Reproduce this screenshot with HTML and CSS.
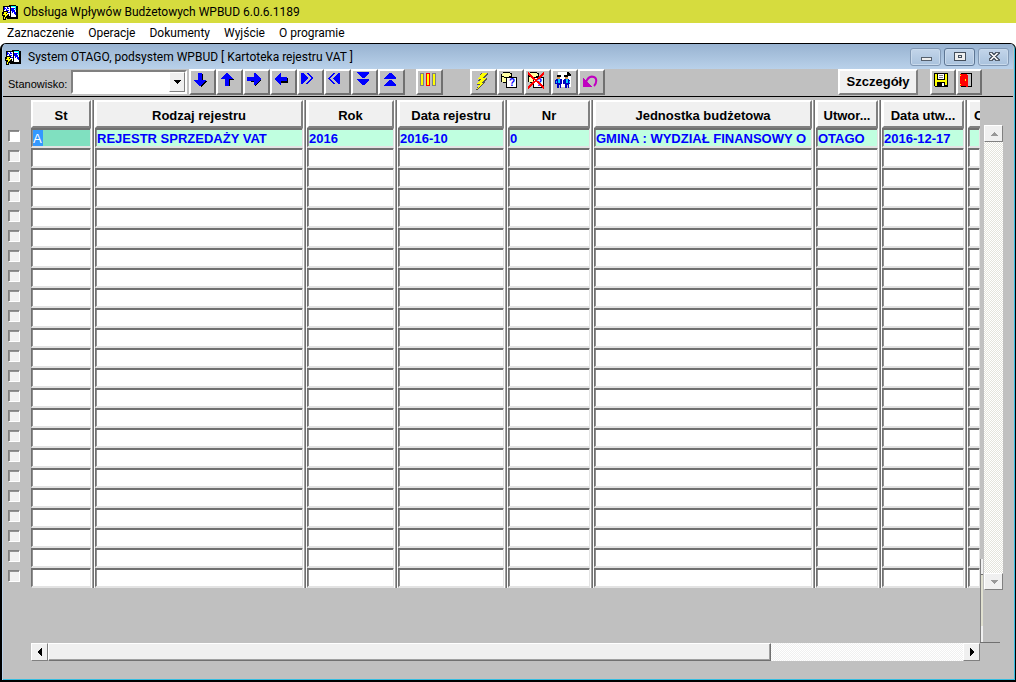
FILE: index.html
```html
<!DOCTYPE html>
<html lang="pl">
<head>
<meta charset="utf-8">
<title>Obsługa Wpływów Budżetowych WPBUD 6.0.6.1189</title>
<link rel="stylesheet" href="styles.css">
<script src="app.js" defer></script>
</head>
<body>
<svg class="defs" aria-hidden="true">
  <symbol id="app" viewBox="0 0 16 16">
    <path fill="#000" d="M1 2h6V1h7v1h2v13H5v-1H1z"/>
    <path fill="#fff" d="M2 3h6v9H2zM9 3h5v10H9z"/>
    <path fill="#0ff" d="M9 2h5v1H9zM13 3h1v3h-1z"/>
    <path fill="#00f" d="M2 3h1v1h1v1H3v1H2zM5 3h1v1h1v1H5zM4 5h1v1h2v1H5v1H4zM2 7h1v1H2zM6 8h2v1H6zM9 4h4v1h-1v1h1v2h1v3h-1v-1h-1V8h-1v1h-1V7H9z"/>
    <path fill="#000" d="M0 8h2V7h4v2H5v1h2v2H6v1H5v1H4v2H1v-2h1v-2H0z"/>
    <path fill="#ff0" d="M2 8h3v1H4v1h2v1H5v1H4v1H3v2H2v-2h1v-2H1v-1h1z"/>
  </symbol>
  <symbol id="query" viewBox="0 0 18 18">
    <path d="M3 0h7v1h2v10H3v-1H1V2h2z"/>
    <path fill="#ffffa0" d="M3 1h7v1h1v2H9v1H4V4H2V2h1zM2 5h2v1h7v4H2z"/>
    <path fill="#fff" stroke="#000" d="M6.500 5.500h10v10h-10z"/>
    <text x="9" y="14" class="mark">?</text>
  </symbol>
</svg>
<header class="titlebar">
  <svg class="app-icon"><use href="#app"/></svg>
  <h1>Obsługa Wpływów Budżetowych WPBUD 6.0.6.1189</h1>
</header>
<nav class="menu">
  <button type="button">Zaznaczenie</button>
  <button type="button">Operacje</button>
  <button type="button">Dokumenty</button>
  <button type="button">Wyjście</button>
  <button type="button">O programie</button>
</nav>
<main class="window">
  <div class="window-title">
    <svg class="app-icon"><use href="#app"/></svg>
    <h2>System OTAGO, podsystem WPBUD [ Kartoteka rejestru VAT ]</h2>
    <div class="window-buttons">
      <button type="button" aria-label="Minimalizuj"><svg viewBox="0 0 14 12"><path fill="#eee" stroke="#555f6c" d="M2.500 6.500h10v3h-10z"/></svg></button>
      <button type="button" class="strong" aria-label="Maksymalizuj"><svg viewBox="0 0 14 12"><path fill="#eee" stroke="#444f5c" d="M1.500 1.500h11v8h-11zM5.500 4.500h3v2h-3z"/></svg></button>
      <button type="button" aria-label="Zamknij"><svg viewBox="0 0 14 12"><path fill="#eee" stroke="#555f6c" d="M2 1.500h3l2 2 2-2h3v1L9 5.500l3 3v1H9l-2-2-2 2H2v-1l3-3-3-3z"/></svg></button>
    </div>
  </div>
  <div class="toolbar">
    <label for="station">Stanowisko:</label>
    <div class="combo"><select id="station"><option></option></select><svg viewBox="0 0 16 18" aria-hidden="true"><path d="M5 7h7v1H5zM6 8h5v1H6zM7 9h3v1H7zM8 10h1v1H8z"/></svg></div>
    <div class="tools">
      <button type="button" aria-label="W dół"><svg viewBox="0 0 16 16"><path d="M7 2h4v7h4L9 15z"/><path fill="#00f" d="M6 1h4v7h4v1L8 14 2 9V8h4z"/></svg></button>
      <button type="button" aria-label="W górę"><svg viewBox="0 0 16 16"><path d="M7 14h4V8h4v-1L9 3z"/><path fill="#00f" d="M6 14h4V7h4V6L8 1 2 6v1h4z"/></svg></button>
      <button type="button" aria-label="W prawo"><svg viewBox="0 0 16 16"><path d="M2 10h7v5l6-7z"/><path fill="#00f" d="M1 5h7V1h1l6 6-6 6H8V9H1z"/></svg></button>
      <button type="button" aria-label="W lewo"><svg viewBox="0 0 16 16"><path d="M15 6v5H8v3L2 8z"/><path fill="#00f" d="M14 5H8V1H7L1 7l6 6h1V9h6z"/></svg></button>
      <button type="button" aria-label="Następna strona"><svg viewBox="0 0 16 16"><path fill="#00f" d="M1 1h2l5 5-5 6H1zM6 1h2l5 5-5 6H6l5-6z"/></svg></button>
      <button type="button" aria-label="Poprzednia strona"><svg viewBox="0 0 16 16"><path fill="#00f" d="M13 1h-2L6 6l5 6h2zM8 1H6L1 6l5 6h2L3 6z"/></svg></button>
      <button type="button" aria-label="Ostatni"><svg viewBox="0 0 16 16"><path fill="#00f" d="M3 0h12v1l-5 5H8L3 1zM3 7h12v1l-5 5H8L3 8z"/></svg></button>
      <button type="button" aria-label="Pierwszy"><svg viewBox="0 0 16 16"><path fill="#00f" d="M3 14h12v-1l-5-5H8l-5 5zM3 7h12V6l-5-5H8L3 6z"/></svg></button>
    </div>
    <div class="tools columns">
      <button type="button" aria-label="Kolumny"><svg class="wide" viewBox="0 0 18 18"><path fill="#ff0" stroke="#808080" d="M1.500 1.500h3v12h-3zM13.500 1.500h3v12h-3z"/><path fill="#ff0" stroke="red" d="M7.500 1.500h3v12h-3z"/></svg></button>
    </div>
    <div class="tools actions">
      <button type="button" aria-label="Wykonaj"><svg class="wide" viewBox="0 0 18 18"><path fill="#555" d="M8 1h7v1l-3 4h2v1l-3 3h1v1l-8 7h-1l3-5H4l3-4H5z"/><path fill="#ff0" d="M9 1h5l-4 5h3l-4 5h2l-7 6 3-5H4l4-5H5z"/></svg></button>
      <button type="button" aria-label="Zapytanie"><svg class="wide" viewBox="0 0 18 18"><use href="#query"/></svg></button>
      <button type="button" aria-label="Anuluj zapytanie"><svg class="wide" viewBox="0 0 18 18"><use href="#query"/><path stroke="red" stroke-width="2" d="M1 1l16 15M17 1L1 16"/></svg></button>
      <button type="button" aria-label="Użytkownicy"><svg class="wide" viewBox="0 0 18 18"><path fill="#fff" d="M4 0h10l3 3v12H4z"/><path d="M13 0h1l3 3v1h-4zM3 3h4v2H3zM10 3h4v2h-4z"/><path fill="#d09050" d="M3 5h3v2H3zM11 5h3v2h-3z"/><path fill="#0000c0" d="M2 7h6v5H7v4H3v-4H1V8h1zM10 7h5v1h1v4h-1v4h-4v-4H9V8h1z"/><path fill="#00c8ff" d="M4 7h2v4H4zM12 7h2v4h-2zM2 9h1v2H2zM15 9h1v2h-1z"/><path fill="#c0c0c0" d="M5 13h1v3H5zM13 13h1v3h-1z"/></svg></button>
      <button type="button" aria-label="Cofnij"><svg class="wide" viewBox="0 0 18 18"><path class="smooth" fill="none" stroke="#c000c0" stroke-width="2" d="M5 10c2-5 5-6 8-5 3 1 3 6 0 9"/><path fill="#c000c0" d="M2 6v9h9z"/></svg></button>
    </div>
    <button type="button" class="details">Szczegóły</button>
    <div class="tools file">
      <button type="button" aria-label="Zapisz"><svg viewBox="0 0 16 16"><path d="M1 1h14v14H2l-1-1z"/><path fill="#ff0" d="M2 2h2v6h8V2h2v11h-2v-3H4v4H2z"/><path fill="#fff" d="M5 2h6v5H5zM9 11h2v3H9z"/><path fill="#808080" d="M6 3h4v1H6zM6 5h4v1H6z"/></svg></button>
      <button type="button" aria-label="Wyjście"><svg viewBox="0 0 16 16"><path d="M2 1h11v14H2z"/><path fill="#c0c0c0" d="M8 2h4v12H8z"/><path fill="red" d="M1 2h7v1h1v12H7v-1H1z"/><path fill="#ff0" d="M6 7h1v2H6zM1 3h1v1H1zM1 12h1v1H1z"/></svg></button>
    </div>
  </div>
  <div class="work">
    <div class="grid-view">
      <table class="register">
        <colgroup><col class="c-check"><col class="c-st"><col class="c-kind"><col class="c-year"><col class="c-date"><col class="c-no"><col class="c-unit"><col class="c-author"><col class="c-created"><col class="c-next"></colgroup>
        <thead><tr><td></td><th scope="col"><span>St</span></th><th scope="col"><span>Rodzaj rejestru</span></th><th scope="col"><span>Rok</span></th><th scope="col"><span>Data rejestru</span></th><th scope="col"><span>Nr</span></th><th scope="col"><span>Jednostka budżetowa</span></th><th scope="col"><span>Utwor...</span></th><th scope="col"><span>Data utw...</span></th><th scope="col" class="clipped"><span>C</span></th></tr></thead>
        <tbody id="rows"></tbody>
      </table>
    </div>
    <div class="side">
      <div class="sliver"></div>
      <div class="vscroll">
        <button type="button" aria-label="Przewiń w górę"><svg viewBox="0 0 16 14"><path fill="#999" d="M8 5h1v1h1v1h1v1h1v1H5V8h1V7h1V6h1z"/></svg></button>
        <button type="button" aria-label="Przewiń w dół"><svg viewBox="0 0 16 14"><path fill="#999" d="M5 5h7v1h-1v1h-1v1H9v1H8V8H7V7H6V6H5z"/></svg></button>
      </div>
    </div>
  </div>
  <div class="hscroll">
    <button type="button" aria-label="Przewiń w lewo"><svg viewBox="0 0 16 14"><path d="M9 3h1v8H9v-1H8V9H7V8H6V6h1V5h1V4h1z"/></svg></button>
    <div class="track"><div class="thumb"></div></div>
    <button type="button" aria-label="Przewiń w prawo"><svg viewBox="0 0 16 14"><path d="M6 3h1v1h1v1h1v1h1v2H9v1H8v1H7v1H6z"/></svg></button>
  </div>
</main>
</body>
</html>
```
FILE: app.js
```js
const columns = ["St", "Rodzaj rejestru", "Rok", "Data rejestru", "Nr", "Jednostka budżetowa", "Utworzył", "Data utworzenia", "Następna"];
const records = [["A", "REJESTR SPRZEDAŻY VAT", "2016", "2016-10", "0", "GMINA : WYDZIAŁ FINANSOWY O", "OTAGO", "2016-12-17", ""]];
const visibleRows = 23;
const body = document.getElementById("rows");

for (let i = 0; i < visibleRows; i++) {
  const row = body.insertRow();
  const record = records[i];
  if (record) row.className = "current";
  const check = document.createElement("input");
  check.type = "checkbox";
  check.setAttribute("aria-label", `Zaznacz wiersz ${i + 1}`);
  row.insertCell().append(check);
  columns.forEach((name, c) => {
    const field = document.createElement("input");
    field.type = "text";
    field.value = record ? record[c] : "";
    field.setAttribute("aria-label", `${name}, wiersz ${i + 1}`);
    if (record && c === 0) field.className = "active";
    const cell = row.insertCell();
    cell.className = "field";
    cell.append(field);
  });
}
```
FILE: styles.css
```css
* { box-sizing: border-box; }
body {
  margin: 0;
  min-height: 100vh;
  display: flex;
  flex-direction: column;
  background: #fff;
  color: #000;
  font: 12px/16px Roboto, "Open Sans", sans-serif;
}
button, input, select { margin: 0; padding: 0; border: 0; border-radius: 0; font: inherit; color: inherit; }
svg { display: block; shape-rendering: crispEdges; }
.smooth { shape-rendering: auto; }
.mark { font: 700 10px "Liberation Sans", Arial, sans-serif; fill: #00f; }
.defs { position: absolute; width: 0; height: 0; }
h1, h2 { margin: 0; font-size: 12px; font-weight: 400; white-space: nowrap; }
.app-icon { width: 16px; height: 16px; flex: none; }

.titlebar { display: flex; align-items: center; gap: 5px; height: 23px; padding-left: 2px; background: #d6dc3e; }
.menu { display: flex; gap: 14px; height: 20px; padding-left: 7px; align-items: center; }
.menu button { background: none; }

.window {
  flex: 1;
  display: flex;
  flex-direction: column;
  border: 1px solid #000;
  border-width: 1px 1px 2px 2px;
  border-radius: 6px 6px 0 0;
  background: #c0c0c0;
  box-shadow: inset 1px 0 #b9d1ea, inset -1px -1px #35bde0;
  padding: 0 2px 2px 1px;
  overflow: hidden;
}
.window-title { display: flex; align-items: center; gap: 7px; height: 25px; padding: 0 4px 0 2px; background: linear-gradient(#98b3d1, #b9d1ea); }
.window-buttons { display: flex; gap: 3px; margin-left: auto; }
.window-buttons button { width: 31px; height: 18px; display: grid; place-items: center; border: 1px solid #8299b5; border-radius: 3px; background: linear-gradient(#c3d5ea, #a9c2dd); box-shadow: inset 0 0 0 1px #c9daec; }
.window-buttons .strong { border-color: #5d7694; }
.window-buttons svg { width: 14px; height: 12px; }

.toolbar { display: flex; height: 28px; border-bottom: 1px solid #000; font: 11px/14px "Liberation Sans", Arial, sans-serif; }
.toolbar label { padding: 8px 4px 0 5px; }
.combo { display: flex; width: 116px; height: 24px; margin: 1px 2px 0 0; border: 2px solid; border-color: #808080 #fff #fff #808080; background: #fff; position: relative; }
.combo select { flex: 1; appearance: none; background: none; }
.combo svg { position: absolute; right: 0; top: 0; width: 16px; height: 20px; background: #f0f0f0; border: 1px solid; border-color: #fff #808080 #808080 #fff; pointer-events: none; }
.tools { display: flex; }
.tools button { width: 27px; height: 26px; padding: 1px 0 0 1px; display: flex; background: #c0c0c0; border: 2px solid; border-color: #fff #707070 #707070 #fff; }
.tools svg { width: 16px; height: 16px; flex: none; }
.tools .wide { width: 18px; height: 18px; }
.columns { margin-left: 11px; }
.actions { margin-left: 27px; }
.details { margin-left: auto; width: 80px; height: 26px; background: #f0f0f0; border: 2px solid; border-color: #fff #808080 #808080 #fff; font-size: 13px; font-weight: 700; }
.file { margin: 0 31px 0 12px; }
.file button { width: 26px; }

.work { display: flex; height: 546px; }
.grid-view { flex: 1; min-width: 0; overflow: hidden; padding-top: 3px; }
.register { width: 100%; table-layout: fixed; border-collapse: collapse; font: 700 13px/16px "Liberation Sans", Arial, sans-serif; }
.register th, .register td { padding: 0; }
.c-check { width: 28px; }
.c-st { width: 64px; }
.c-kind { width: 212px; }
.c-year { width: 91px; }
.c-date { width: 110px; }
.c-no { width: 86px; }
.c-author { width: 66px; }
.c-created { width: 86px; }
.c-next { width: 12px; }
.register th, .register .field {
  padding-right: 4px;
  background: linear-gradient(90deg, #fff 1px, #a0a0a0 1px 2px, #707070 2px 3px, #fff 3px) right / 4px 100% no-repeat;
}
.register th span { display: block; height: 28px; padding-top: 6px; background: #f0f0f0; border: 2px solid; border-color: #fff #808080 #808080 #fff; white-space: nowrap; overflow: hidden; }
.register .clipped, .register td.field:last-child { padding-right: 0; background: none; }
.register .clipped span { text-align: left; padding-left: 4px; border-right: 0; }
.register input { display: block; }
.register input[type="text"] { width: 100%; height: 20px; background: #fff; border: 1px solid; border-color: #707070 #e3e3e3 #e3e3e3 #707070; box-shadow: inset 0 1px #707070, inset 1px 0 #909090; outline: 0; border-bottom: 2px solid #e3e3e3; }
.register .current input[type="text"] { background-color: #c0ffe0; color: #00f; padding: 1px 0 0 1px; }
.register .current input.active[type="text"] { background: linear-gradient(#3399ff, #3399ff) 1px 1px / 10px 100% no-repeat #80e0c0; color: #fff; font-weight: 400; }
.register input[type="checkbox"] { appearance: none; width: 12px; height: 12px; margin-left: 5px; margin-bottom: 4px; background: #f0f0f0; border: 1px solid; border-color: #808080 #fff #fff #808080; box-shadow: inset 1px 1px #909090; }
.register .current input[type="checkbox"] { background: #fff; }

.side { width: 33px; display: flex; gap: 1px; position: relative; }
.side::after { content: ""; position: absolute; left: 0; bottom: 0; width: 20px; height: 1px; background: #707070; }
.sliver { width: 3px; height: 84px; align-self: flex-end; border-left: 1px solid #808080; background: linear-gradient(#f0f0f0 15px, #707070 15px 16px, #e0e0d0 16px 67px, #f0f0f0 67px); }
.vscroll { width: 19px; margin: 28px 0 53px; display: flex; flex-direction: column; justify-content: space-between; background: repeating-conic-gradient(#fff 0 25%, #e4e4dc 0 50%) 0 0 / 2px 2px; }
.vscroll button, .hscroll button { flex: none; display: grid; place-items: center; background: #f0f0f0; border: 1px solid; border-color: #fff #808080 #808080 #fff; }
.vscroll button { height: 17px; }
.vscroll svg, .hscroll svg { width: 16px; height: 14px; }
.hscroll { display: flex; height: 18px; margin: 0 33px 17px 28px; }
.hscroll button { width: 17px; }
.track { flex: 1; background: repeating-conic-gradient(#fff 0 25%, #f0f0f0 0 50%) 0 0 / 2px 2px; }
.thumb { width: 79%; height: 100%; background: #f0f0f0; border: 1px solid; border-color: #fff #707070 #707070 #fff; box-shadow: inset -1px -1px #a0a0a0; }
```
